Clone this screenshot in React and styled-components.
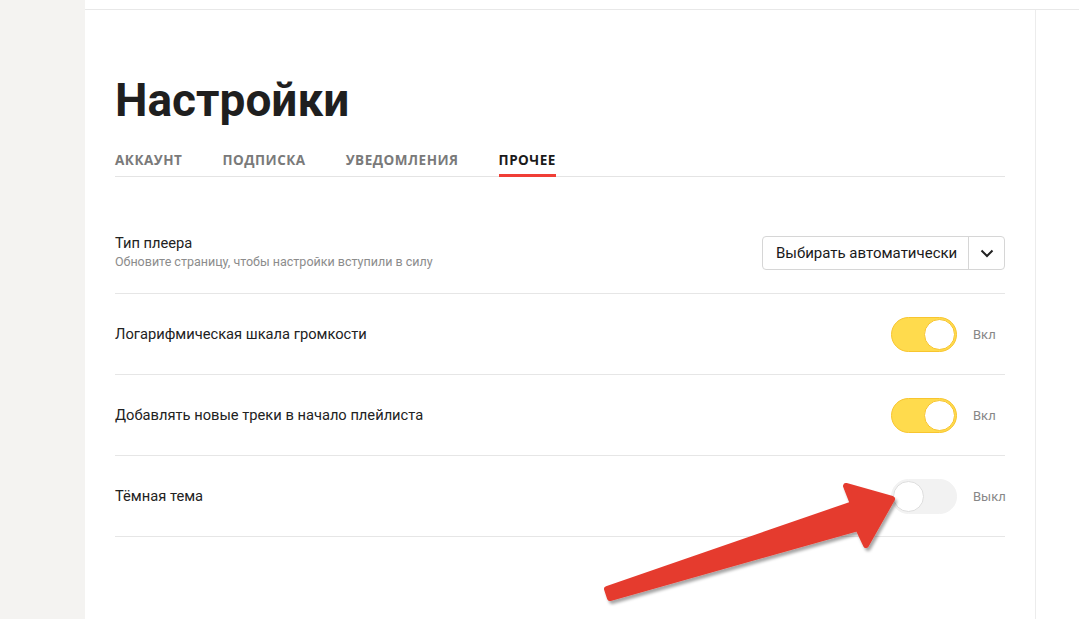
import React, { useState } from 'react'
import styled, { createGlobalStyle } from 'styled-components'

const GlobalStyle = createGlobalStyle`
  html, body {
    margin: 0;
    padding: 0;
    background: #fff;
  }
  body {
    font-family: "Roboto", "Noto Sans", Arial, sans-serif;
    color: #000;
  }
`

const Page = styled.div`
  position: relative;
  display: flex;
  width: 1079px;
  height: 619px;
  overflow: hidden;
`

const Sidebar = styled.aside`
  width: 85px;
  flex: none;
  background: #f4f3f1;
`

const Main = styled.main`
  flex: 1;
  padding-top: 9px;
  display: flex;
  flex-direction: column;
`

const Frame = styled.div`
  flex: 1;
  display: flex;
  border-top: 1px solid #e8e8e8;
`

const Content = styled.section`
  width: 890px;
  padding: 0 30px;
  border-right: 1px solid #ececec;
`

const Title = styled.h1`
  margin: 62px 0 0;
  font-family: "Roboto", "Noto Sans", sans-serif;
  font-weight: 700;
  font-size: 46px;
  line-height: 56px;
  color: #1f1f1f;
`

const Tabs = styled.nav`
  display: flex;
  gap: 40px;
  margin-top: 23px;
  border-bottom: 1px solid #e4e4e4;
`

const Tab = styled.div`
  padding-bottom: 5px;
  font-family: "Open Sans", sans-serif;
  font-weight: 700;
  font-size: 13.5px;
  line-height: 18px;
  letter-spacing: 0.5px;
  text-transform: uppercase;
  color: ${({ $active }) => ($active ? '#1a1a1a' : '#7a7a7a')};
  border-bottom: 3px solid ${({ $active }) => ($active ? '#f03e36' : 'transparent')};
  margin-bottom: -1px;
`

const List = styled.div`
  margin-top: 36px;
`

const Row = styled.div`
  display: flex;
  align-items: center;
  justify-content: space-between;
  height: 80px;
  border-bottom: 1px solid #e6e6e6;
`

const Label = styled.div`
  display: flex;
  flex-direction: column;
  gap: 2px;
  margin-top: -4px;
`

const Name = styled.div`
  font-size: 14.7px;
  line-height: 18px;
  color: #222;
`

const Hint = styled.div`
  font-size: 12.5px;
  line-height: 15px;
  color: #8c8c8c;
`

const Select = styled.div`
  display: flex;
  height: 32px;
  border: 1px solid #d6d6d6;
  border-radius: 4px;
  font-size: 15px;
  color: #1a1a1a;
  align-items: stretch;
`

const SelectValue = styled.div`
  display: flex;
  align-items: center;
  width: 192px;
  padding-left: 13px;
  border-right: 1px solid #d6d6d6;
`

const SelectArrow = styled.div`
  width: 35px;
  display: flex;
  align-items: center;
  justify-content: center;
`

const SwitchWrap = styled.div`
  display: flex;
  align-items: center;
  gap: 16px;
`

const Track = styled.div`
  position: relative;
  box-sizing: border-box;
  width: 66px;
  height: 35px;
  border-radius: 18px;
  background: ${({ $on }) => ($on ? '#ffdb4d' : '#f2f2f2')};
  border: 1px solid ${({ $on }) => ($on ? '#f8c52f' : '#f2f2f2')};
  cursor: pointer;
`

const Knob = styled.div`
  position: absolute;
  top: 1px;
  left: ${({ $on }) => ($on ? '32px' : '1px')};
  width: 31px;
  height: 31px;
  box-sizing: border-box;
  border-radius: 50%;
  background: #fff;
  border: 1px solid ${({ $on }) => ($on ? '#f8c52f' : '#dedede')};
`

const State = styled.span`
  width: 32px;
  font-size: 13px;
  color: #878787;
`

const Overlay = styled.svg`
  position: absolute;
  left: 0;
  top: 0;
  pointer-events: none;
`

function Switch({ on, onToggle }) {
  return (
    <SwitchWrap>
      <Track $on={on} onClick={onToggle}>
        <Knob $on={on} />
      </Track>
      <State>{on ? 'Вкл' : 'Выкл'}</State>
    </SwitchWrap>
  )
}

const tabs = ['Аккаунт', 'Подписка', 'Уведомления', 'Прочее']

export default function App() {
  const [flags, setFlags] = useState({ log: true, top: true, dark: false })
  const flip = (k) => setFlags((f) => ({ ...f, [k]: !f[k] }))

  return (
    <>
      <GlobalStyle />
      <Page>
        <Sidebar />
        <Main>
          <Frame>
            <Content>
              <Title>Настройки</Title>
              <Tabs>
                {tabs.map((t, i) => (
                  <Tab key={t} $active={i === 3}>{t}</Tab>
                ))}
              </Tabs>
              <List>
                <Row>
                  <Label>
                    <Name>Тип плеера</Name>
                    <Hint>Обновите страницу, чтобы настройки вступили в силу</Hint>
                  </Label>
                  <Select>
                    <SelectValue>Выбирать автоматически</SelectValue>
                    <SelectArrow>
                      <svg width="14" height="9" viewBox="0 0 14 9">
                        <path d="M1.5 1.5 L7 7 L12.5 1.5" fill="none" stroke="#222" strokeWidth="2" />
                      </svg>
                    </SelectArrow>
                  </Select>
                </Row>
                <Row>
                  <Name>Логарифмическая шкала громкости</Name>
                  <Switch on={flags.log} onToggle={() => flip('log')} />
                </Row>
                <Row>
                  <Name>Добавлять новые треки в начало плейлиста</Name>
                  <Switch on={flags.top} onToggle={() => flip('top')} />
                </Row>
                <Row>
                  <Name>Тёмная тема</Name>
                  <Switch on={flags.dark} onToggle={() => flip('dark')} />
                </Row>
              </List>
            </Content>
          </Frame>
        </Main>
        <Overlay width="1079" height="619" viewBox="0 0 1079 619">
          <defs>
            <filter id="shadow" x="-10%" y="-10%" width="120%" height="130%">
              <feDropShadow dx="2" dy="3" stdDeviation="1.5" floodColor="#000" floodOpacity="0.35" />
            </filter>
          </defs>
          <polygon
            points="892,499 846,486 853,504 607,589 610,598 858,528 866,545"
            fill="#e53b2f"
            stroke="#e53b2f"
            strokeWidth="6"
            strokeLinejoin="round"
            filter="url(#shadow)"
          />
        </Overlay>
      </Page>
    </>
  )
}
